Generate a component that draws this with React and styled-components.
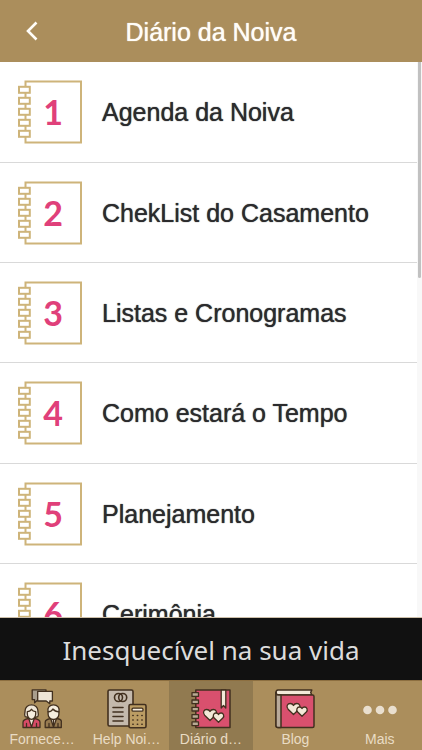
import React from "react";
import styled, { createGlobalStyle } from "styled-components";

const Global = createGlobalStyle`
  *, *::before, *::after { box-sizing: border-box; }
  body { margin: 0; background: #fff; }
`;

const sans = `"Liberation Sans", Arial, sans-serif`;

const Screen = styled.div`
  display: flex;
  flex-direction: column;
  height: 100vh;
  overflow: hidden;
  font-family: ${sans};
  background: #fff;
`;

const Header = styled.header`
  flex: none;
  display: grid;
  grid-template-columns: 64px 1fr 64px;
  align-items: center;
  height: 62px;
  background: #ab8e5c;
  color: #fffdf8;
`;

const BackButton = styled.button`
  display: grid;
  place-items: center;
  height: 62px;
  padding: 0;
  border: 0;
  background: none;
  color: inherit;
`;

const Title = styled.h1`
  margin: 0;
  padding-top: 2px;
  text-align: center;
  font-size: 25px;
  line-height: 28px;
  font-weight: 400;
  text-shadow: 0 0 1px currentColor;
`;

const Content = styled.main`
  flex: 1;
  min-height: 0;
  display: grid;
  grid-template-columns: 1fr 5px;
  overflow: hidden;
  border-bottom: 1px solid #cdbfa9;
`;

const List = styled.ul`
  min-height: 0;
  margin: 0;
  padding: 0;
  list-style: none;
  overflow: hidden;
`;

const Row = styled.li`
  height: 100px;
  border-bottom: 1px solid #d9d9d9;
  &:nth-child(3n + 1) { height: 101px; }
`;

const RowLink = styled.a`
  display: flex;
  align-items: center;
  gap: 20px;
  height: 100%;
  padding-left: 18px;
  color: #2b2b2d;
  font-size: 25px;
  line-height: 28px;
  text-decoration: none;
  text-shadow: 0 0 1px currentColor;
`;

const Notebook = styled.span`
  position: relative;
  flex: none;
  width: 64px;
  height: 64px;
  svg { display: block; }
`;

const Digit = styled.span`
  position: absolute;
  inset: 0 0 0 6px;
  text-align: center;
  font: 700 34px/64px Lato, sans-serif;
  color: #e0407a;
  text-shadow: none;
`;

const ScrollTrack = styled.div`
  padding: 0 1px;
  background: #f8f8f8;
`;

const ScrollThumb = styled.div`
  height: 39%;
  border-radius: 0 0 2px 2px;
  background: #c1c1c1;
`;

const Banner = styled.aside`
  flex: none;
  height: 62px;
  padding-top: 1px;
  background: #111;
  color: #dcdcdc;
  text-align: center;
  font: 400 26px/62px "Noto Sans", sans-serif;
`;

const TabBar = styled.nav`
  flex: none;
  display: grid;
  grid-template-columns: repeat(5, 1fr);
  height: 70px;
  background: #ab8e5c;
  border-top: 1px solid #8d6f40;
`;

const Tab = styled.a`
  display: flex;
  flex-direction: column;
  align-items: center;
  min-width: 0;
  padding-top: 8px;
  background: ${(p) => (p.$active ? "#917a50" : "transparent")};
  color: #e9dcc4;
  font-size: 14px;
  line-height: 18px;
  text-decoration: none;
  white-space: nowrap;
  svg { display: block; flex: none; margin-bottom: 1px; }
`;

const rings = [6, 17, 28, 39, 50];

function NotebookIcon({ number }) {
  return (
    <Notebook>
      <svg width="64" height="64" viewBox="0 0 64 64" fill="#fff" stroke="#ceb47a" strokeWidth="2" aria-hidden="true">
        <rect x="7.5" y="1.5" width="55.5" height="61" />
        {rings.map((y) => (
          <rect key={y} x="1" y={y + 0.8} width="10.8" height="6" />
        ))}
      </svg>
      <Digit>{number}</Digit>
    </Notebook>
  );
}

const ink = "#42301f";

function Hearts({ x, y }) {
  return (
    <g transform={`translate(${x} ${y})`} fill="#f3e9d8" stroke={ink} strokeWidth="1.3" strokeLinejoin="round">
      <path d="M7 11.5 L1.6 6.2 C-.8 3.4 1.1 .5 3.7 .5 C5.4 .5 6.5 1.4 7 2.5 C7.5 1.4 8.6 .5 10.3 .5 C12.9 .5 14.8 3.4 12.4 6.2 Z" />
      <path d="M15.5 13.2 L11.2 9 C9.2 6.7 10.7 4 12.9 4 C14.2 4 15.1 4.7 15.5 5.6 C15.9 4.7 16.8 4 18.1 4 C20.3 4 21.8 6.7 19.8 9 Z" />
    </g>
  );
}

function CoupleIcon() {
  return (
    <svg width="40" height="40" viewBox="0 0 40 40" fill="none" stroke={ink} strokeWidth="1.3" strokeLinejoin="round" strokeLinecap="round" aria-hidden="true">
      <path d="M10.2.8H24v9.8H16.2L12.6 13.8V10.6H10.2Z" fill="#a99e8d" />
      <path d="M15.7 2.3H30.4V12H27.8V14.8L24.2 12H15.7Z" fill="#eee5d6" />
      <path d="M1 38.5V33.2C1 30.7 3.8 30 6.5 29.5L9.5 31.5 12.5 29.5C15.2 30 18 30.7 18 33.2V38.5Z" fill="#d84b67" />
      <path d="M6.8 29.6 9.5 38 12.2 29.6Z" fill="#eee5d6" />
      <path d="M3.2 27.7C1.8 25.7 3.1 24.8 3.1 21.6C3.1 18.1 6 15.8 9.5 15.8S15.9 18.1 15.9 21.6C15.9 24.8 17.2 25.7 15.8 27.7L12.5 28.5H6.5Z" fill="#eee5d6" />
      <path d="M5.3 22.7C8 22.6 8.7 21.5 9.5 20.3C10.3 21.8 11.5 22.6 13.7 22.7V25C13.7 28 11.7 30.3 9.5 30.3S5.3 28 5.3 25Z" fill="#f5eddf" />
      <path d="M4.5 34.5V38M14.5 34.5V38" />
      <path d="M23.2 38.5V33.2C23.2 30.7 26 30 28.7 29.5H34.7C37.4 30 40 30.7 39.3 33.5V38.5Z" fill="#967a50" />
      <path d="M28.7 29.5 31.5 38 34.5 29.5Z" fill="#eee5d6" />
      <path d="M31.5 31V37M27 34.5V38M36 34.5V38" />
      <path d="M26.1 23C24.8 19 27.6 15.8 31.5 15.8S38.2 19 36.9 23V25.2C36.9 28.2 34.2 30.5 31.5 30.5S26.1 28.2 26.1 25.2Z" fill="#f5eddf" />
      <path d="M26 22.8C28.8 22.6 30.3 21.5 30.9 20C32.5 22.2 34.3 22.7 37 22.8" />
    </svg>
  );
}

function InvoiceIcon() {
  return (
    <svg width="40" height="40" viewBox="0 0 40 40" fill="none" stroke={ink} strokeWidth="1.6" strokeLinecap="round" aria-hidden="true">
      <rect x="1" y="1" width="25" height="36" rx="1.5" fill="#c4b9ac" />
      <circle cx="11.5" cy="8.5" r="4" />
      <circle cx="15.7" cy="8.5" r="4" />
      <path d="M6 18.5H16M6 23H16M6 27.5H16M6 32H16" />
      <rect x="22" y="15.5" width="17" height="23.3" rx="1.5" fill="#bb9c63" />
      <rect x="25" y="19.2" width="11" height="3" rx="1.2" fill="#f5eddf" strokeWidth="1.3" />
      <path d="M25.8 26.5H26.2M30.3 26.5H30.7M34.8 26.5H35.2M25.8 31H26.2M30.3 31H30.7M34.8 31H35.2M25.8 35.2H26.2M30.3 35.2H30.7M34.8 35.2H35.2" strokeWidth="1.5" />
    </svg>
  );
}

function DiaryIcon() {
  return (
    <svg width="40" height="40" viewBox="0 0 40 40" fill="#d9506e" stroke={ink} strokeWidth="1.5" strokeLinejoin="round" aria-hidden="true">
      <rect x="4.8" y="1" width="34.2" height="37.5" />
      <path d="M30.2 1V19L32.5 16.5 34.8 19V1Z" fill="#f3e9d8" strokeWidth="1.3" />
      {[3.7, 11, 18.3, 25.6, 32.9].map((y) => (
        <rect key={y} x="1" y={y} width="6.5" height="3.7" fill="#b9aa94" strokeWidth="1.3" />
      ))}
      <Hearts x={12} y={20} />
    </svg>
  );
}

function BookIcon() {
  return (
    <svg width="40" height="40" viewBox="0 0 40 40" fill="#d9506e" stroke={ink} strokeWidth="1.5" strokeLinejoin="round" aria-hidden="true">
      <path d="M3 1H36.8L35.7 3.5 36.8 6H3C.3 5.8.3 1.2 3 1Z" fill="#f3e9d8" />
      <path d="M1 3.5C1 5.2 1.8 6 3.2 6H37.5Q39 6 39 7.5V37Q39 38.5 37.5 38.5H3Q1 38.5 1 36.5Z" />
      <path d="M1 3.8C1 5.2 1.8 6 3.2 6H6V38.5H3Q1 38.5 1 36.5Z" fill="#b9aa9a" />
      <Hearts x={11.5} y={14} />
    </svg>
  );
}

function MoreIcon() {
  return (
    <svg width="40" height="40" viewBox="0 0 40 40" fill="#e9dfcf" aria-hidden="true">
      <circle cx="7.5" cy="21" r="4.3" />
      <circle cx="20" cy="21" r="4.3" />
      <circle cx="32.5" cy="21" r="4.3" />
    </svg>
  );
}

const entries = ["Agenda da Noiva", "ChekList do Casamento", "Listas e Cronogramas", "Como estará o Tempo", "Planejamento", "Cerimônia"];

const tabs = [
  { label: "Fornece…", Icon: CoupleIcon },
  { label: "Help Noi…", Icon: InvoiceIcon },
  { label: "Diário d…", Icon: DiaryIcon, active: true },
  { label: "Blog", Icon: BookIcon },
  { label: "Mais", Icon: MoreIcon },
];

export default function App() {
  return (
    <Screen>
      <Global />
      <Header>
        <BackButton type="button" aria-label="Voltar">
          <svg width="14" height="20" viewBox="0 0 14 20" fill="none" stroke="currentColor" strokeWidth="2.6" aria-hidden="true">
            <path d="M11.5 1.5 3 10 11.5 18.5" />
          </svg>
        </BackButton>
        <Title>Diário da Noiva</Title>
      </Header>
      <Content>
        <List>
          {entries.map((name, i) => (
            <Row key={name}>
              <RowLink href="#">
                <NotebookIcon number={i + 1} />
                {name}
              </RowLink>
            </Row>
          ))}
        </List>
        <ScrollTrack>
          <ScrollThumb />
        </ScrollTrack>
      </Content>
      <Banner>Inesquecível na sua vida</Banner>
      <TabBar>
        {tabs.map(({ label, Icon, active }) => (
          <Tab key={label} href="#" $active={active} aria-current={active ? "page" : undefined}>
            <Icon />
            {label}
          </Tab>
        ))}
      </TabBar>
    </Screen>
  );
}
